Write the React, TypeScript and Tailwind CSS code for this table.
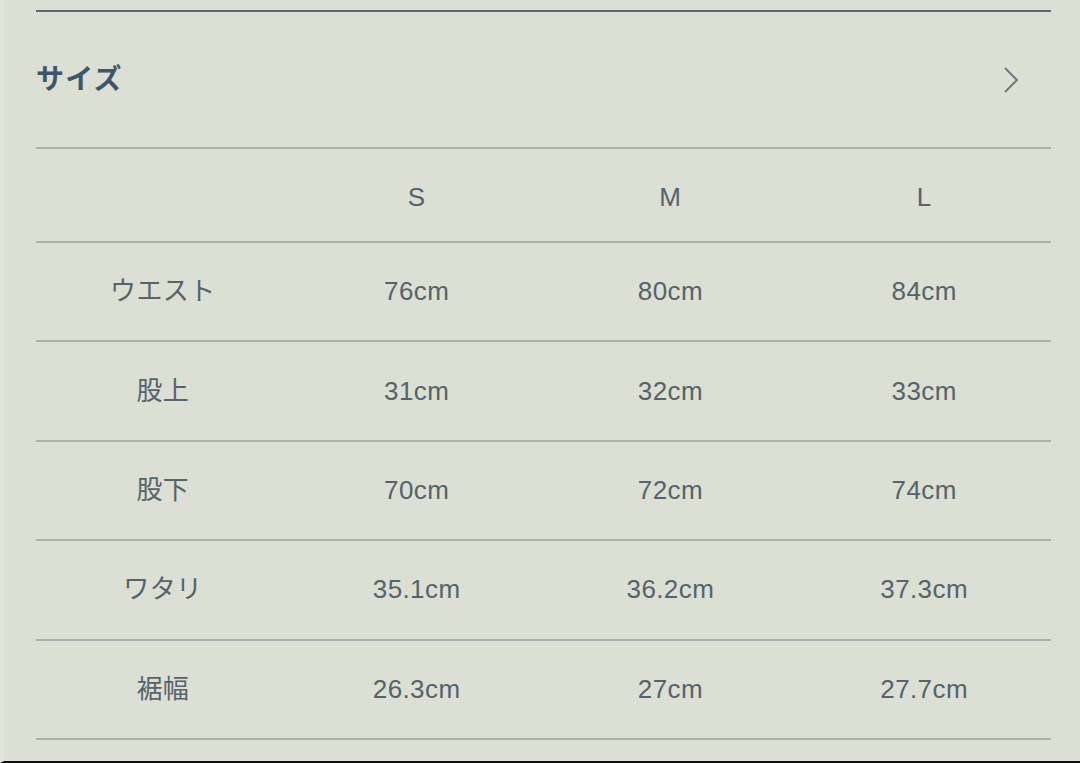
const rows = [
  { label: "ウエスト", s: "76cm", m: "80cm", l: "84cm" },
  { label: "股上", s: "31cm", m: "32cm", l: "33cm" },
  { label: "股下", s: "70cm", m: "72cm", l: "74cm" },
  { label: "ワタリ", s: "35.1cm", m: "36.2cm", l: "37.3cm" },
  { label: "裾幅", s: "26.3cm", m: "27cm", l: "27.7cm" },
];

const font = { fontFamily: '"Liberation Sans", "Noto Sans CJK JP", sans-serif' };

export default function App() {
  return (
    <div
      className="w-[1080px] h-[763px] bg-[#dbdfd4] border-l-4 border-l-[#e1e4db] border-b-2 border-b-[#111] overflow-hidden"
      style={font}
    >
      <div className="ml-[32px] mr-[29px] pt-[10px]">
        <div className="h-[2px] bg-[#5c676f]" />

        <div className="h-[135px] flex items-center justify-between">
          <h2 className="text-[28px] font-bold text-[#3e5666] tracking-[1.2px] mt-[1px]">
            サイズ
          </h2>
          <svg
            width="18"
            height="28"
            viewBox="0 0 18 28"
            fill="none"
            stroke="#6b7278"
            strokeWidth="1.8"
            className="mr-[31px]"
          >
            <path d="M3 2 L15 14 L3 26" />
          </svg>
        </div>

        <div className="h-[2px] bg-[#aab0ad]" />

        <div className="grid grid-cols-4 h-[92px] pt-[5px] items-center text-center text-[26px] tracking-[0.4px] text-[#56636b]">
          <div />
          <div>S</div>
          <div>M</div>
          <div>L</div>
        </div>
        <div className="h-[2px] bg-[#aab0ad]" />

        {rows.map((r) => (
          <div key={r.label}>
            <div className="grid grid-cols-4 h-[97.4px] items-center text-center text-[26px] tracking-[0.4px] text-[#56636b]">
              <div>{r.label}</div>
              <div>{r.s}</div>
              <div>{r.m}</div>
              <div>{r.l}</div>
            </div>
            <div className="h-[2px] bg-[#aab0ad]" />
          </div>
        ))}
      </div>
    </div>
  );
}
